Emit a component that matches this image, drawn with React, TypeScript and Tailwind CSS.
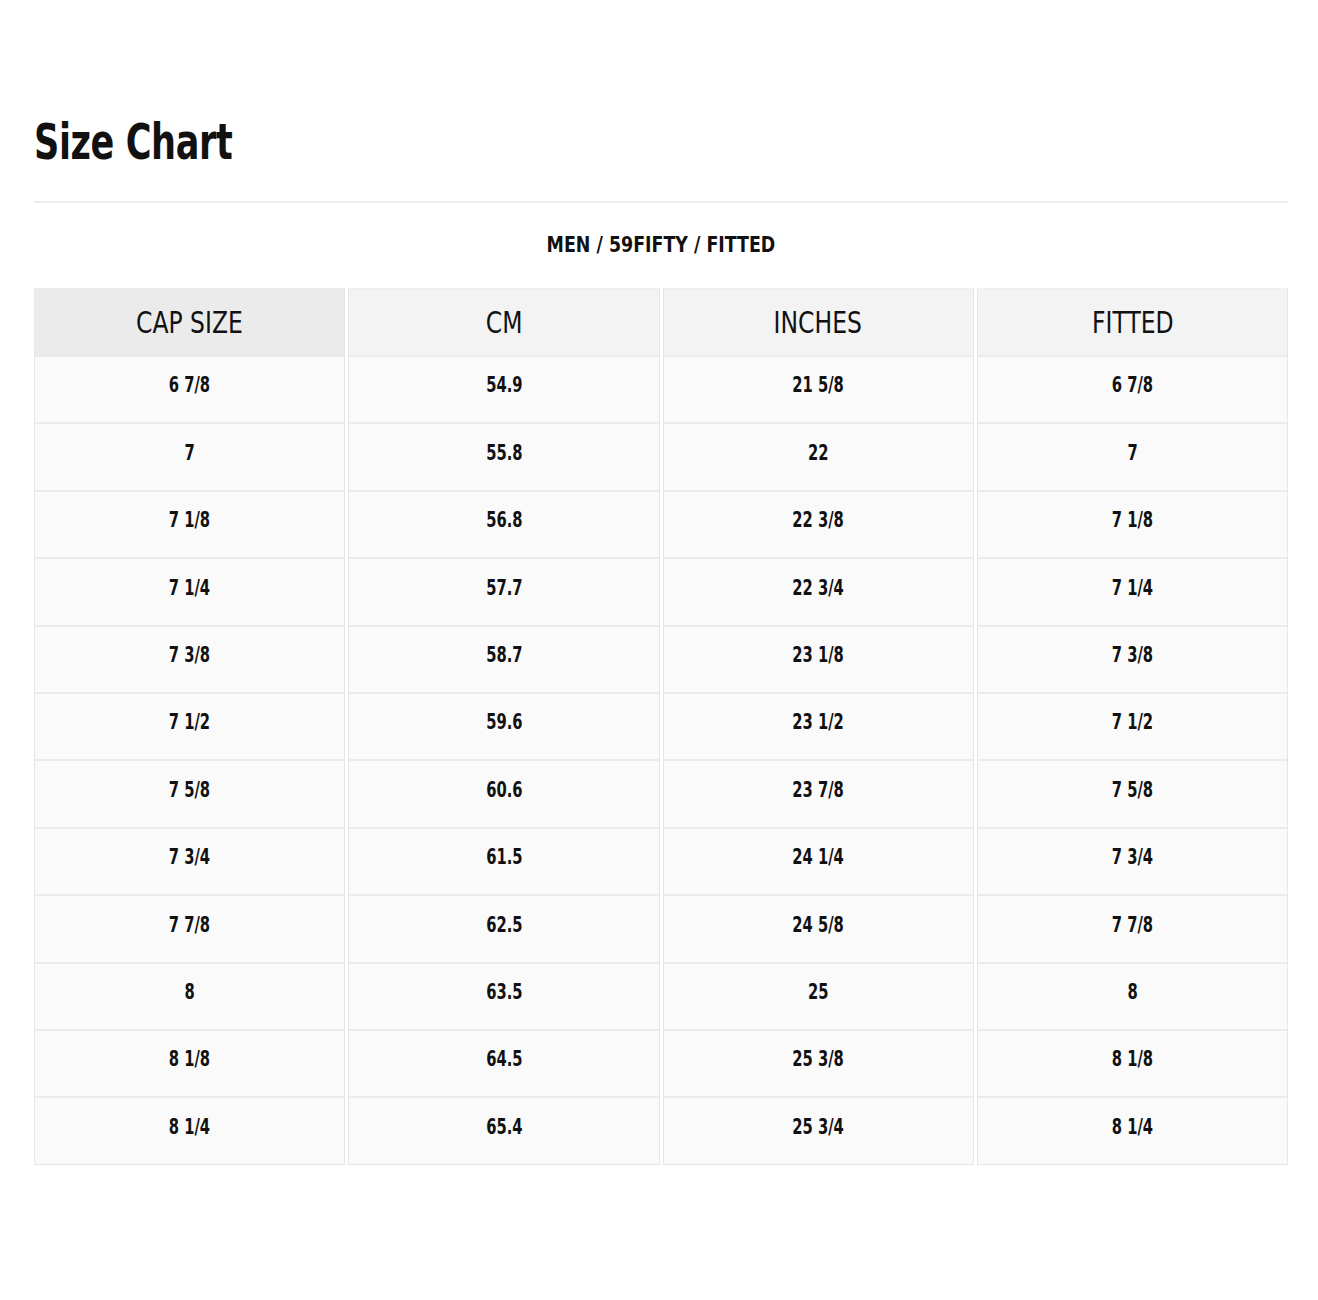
const headers = ["CAP SIZE", "CM", "INCHES", "FITTED"];

const rows = [
  ["6 7/8", "54.9", "21 5/8", "6 7/8"],
  ["7", "55.8", "22", "7"],
  ["7 1/8", "56.8", "22 3/8", "7 1/8"],
  ["7 1/4", "57.7", "22 3/4", "7 1/4"],
  ["7 3/8", "58.7", "23 1/8", "7 3/8"],
  ["7 1/2", "59.6", "23 1/2", "7 1/2"],
  ["7 5/8", "60.6", "23 7/8", "7 5/8"],
  ["7 3/4", "61.5", "24 1/4", "7 3/4"],
  ["7 7/8", "62.5", "24 5/8", "7 7/8"],
  ["8", "63.5", "25", "8"],
  ["8 1/8", "64.5", "25 3/8", "8 1/8"],
  ["8 1/4", "65.4", "25 3/4", "8 1/4"],
];

// condensed face: no narrow font installed, so squeeze DejaVu Sans Condensed a bit
const font = "font-['DejaVu_Sans_Condensed','DejaVu_Sans',sans-serif]";

export default function App() {
  return (
    <div className={`min-h-[1300px] bg-white pl-[34px] pr-[30px] pt-[112px] text-[#111] ${font}`}>
      <h1 className="text-[50px] font-bold leading-[60px] tracking-[-0.5px]">
        <span className="inline-block origin-left scale-x-[0.78]">Size Chart</span>
      </h1>
      <hr className="mt-[29px] border-t-2 border-[#ececec]" />
      <p className="mt-[30px] text-center text-[22px] font-bold leading-[24px]">
        <span className="inline-block scale-x-[0.88]">MEN / 59FIFTY / FITTED</span>
      </p>

      <div className="mt-[31px] grid grid-cols-4 gap-x-[3px]">
        {headers.map((h, c) => (
          <div key={h} className="flex flex-col border border-[#e6e6e6] border-t-[#eeeeee]">
            <div
              className={`flex h-[66px] items-center justify-center text-[30px] ${
                c === 0 ? "bg-[#ebebeb]" : "bg-[#f3f3f3]"
              }`}
            >
              <span className="inline-block scale-x-[0.87]">{h}</span>
            </div>
            {rows.map((r, i) => (
              <div
                key={i}
                className="flex h-[67.4px] items-center justify-center border-t-2 border-[#ebebeb] bg-[#fafafa] pb-[7px] text-[21px] font-bold"
              >
                <span className="inline-block scale-x-[0.78]">{r[c]}</span>
              </div>
            ))}
          </div>
        ))}
      </div>
    </div>
  );
}
